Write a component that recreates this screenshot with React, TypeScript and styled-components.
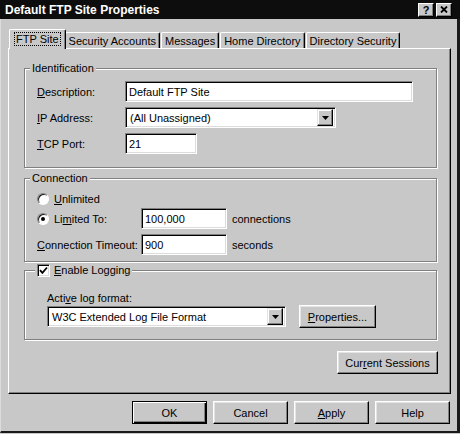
import React from 'react';
import styled, { createGlobalStyle, css } from 'styled-components';

const face = '#c8c8c8';
const shade = '#808080';

const GlobalStyle = createGlobalStyle`
  html, body {
    margin: 0;
    padding: 0;
    background: ${face};
  }
  body {
    font-family: 'Liberation Sans', Arial, sans-serif;
    font-size: 11px;
    color: #000;
  }
  * {
    box-sizing: border-box;
  }
`;

const Window = styled.div`
  width: 460px;
  height: 434px;
  display: flex;
  flex-direction: column;
  background: ${face};
  padding-bottom: 1px;
`;

const TitleBar = styled.div`
  height: 19px;
  flex: none;
  display: flex;
  align-items: center;
  gap: 2px;
  padding: 0 8px 0 5px;
  background: #0d0d0d;
`;

const Title = styled.span`
  flex: 1;
  color: #fff;
  font-weight: bold;
  font-size: 12px;
`;

const CaptionButton = styled.div`
  width: 16px;
  height: 14px;
  display: flex;
  align-items: center;
  justify-content: center;
  background: ${face};
  border: 1px solid;
  border-color: #fff #000 #000 #fff;
  box-shadow: inset -1px -1px ${shade};
  font-weight: bold;
  font-size: 11px;
`;

const Body = styled.div`
  flex: 1;
  display: flex;
  flex-direction: column;
  padding: 10px 6px 0 7px;
  border-left: 1px solid #dcdcdc;
  border-right: 3px solid #1a1a1a;
  border-bottom: 2px solid #1a1a1a;
`;

const TabRow = styled.div`
  height: 19px;
  display: flex;
  align-items: flex-end;
  gap: 1px;
  padding-left: 3px;
`;

const Tab = styled.div<{ $active?: boolean }>`
  height: 16px;
  display: flex;
  align-items: center;
  padding: 0 3px;
  background: ${face};
  border-top: 1px solid #fff;
  border-left: 1px solid #fff;
  border-right: 1px solid #000;
  border-radius: 2px 2px 0 0;
  box-shadow: inset -1px 0 ${shade};
  white-space: nowrap;

  ${(p) =>
    p.$active &&
    css`
      height: 20px;
      padding: 0 5px 2px;
      margin: 0 -2px -1px;
      position: relative;
      z-index: 1;
    `}
`;

const Focus = styled.span`
  outline: 1px dotted #000;
  padding: 0 1px;
`;

const Panel = styled.div`
  height: 346px;
  flex: none;
  display: flex;
  flex-direction: column;
  padding: 13px 13px 0 15px;
  border: 1px solid;
  border-color: #fff #000 #000 #fff;
  box-shadow: inset -1px -1px ${shade};
`;

const Group = styled.fieldset<{ $mt?: number }>`
  margin: ${(p) => p.$mt ?? 0}px 0 0;
  padding: 0;
  min-width: 0;
  border: 1px solid ${shade};
  box-shadow: inset 1px 1px #fff, 1px 1px #fff;
`;

const GroupBody = styled.div<{ $pl?: number; $pb?: number }>`
  padding: 0 12px ${(p) => p.$pb ?? 12}px ${(p) => p.$pl ?? 12}px;
`;

const Legend = styled.legend<{ $ml?: number }>`
  margin-left: ${(p) => p.$ml ?? 5}px;
  padding: 0 2px;
  height: 13px;
  line-height: 13px;
  display: flex;
  align-items: center;
  gap: 4px;
  background: ${face};
`;

const Line = styled.div<{ $mt?: number; $h?: number }>`
  display: flex;
  align-items: center;
  height: ${(p) => p.$h ?? 21}px;
  margin-top: ${(p) => p.$mt ?? 0}px;
`;

const Label = styled.span<{ $w?: number }>`
  display: flex;
  align-items: center;
  gap: 5px;
  flex: none;
  width: ${(p) => (p.$w ? `${p.$w}px` : 'auto')};
  white-space: nowrap;
`;

const Key = styled.span`
  text-decoration: underline;
`;

const sunken = css`
  border: 1px solid;
  border-color: ${shade} #fff #fff ${shade};
  box-shadow: inset 1px 1px #000, inset -1px -1px #dcdcdc;
`;

const TextBox = styled.input<{ $w: number }>`
  width: ${(p) => p.$w}px;
  height: 21px;
  padding: 0 3px;
  margin: 0;
  font: inherit;
  color: #000;
  background: #fff;
  outline: none;
  ${sunken}
`;

const Combo = styled.div<{ $w: number }>`
  width: ${(p) => p.$w}px;
  height: 21px;
  display: flex;
  align-items: center;
  padding: 2px 2px 2px 4px;
  background: #fff;
  ${sunken}
`;

const ComboText = styled.span`
  flex: 1;
`;

const ArrowButton = styled.span`
  width: 16px;
  height: 17px;
  display: flex;
  align-items: center;
  justify-content: center;
  background: ${face};
  border: 1px solid;
  border-color: #e4e4e4 #000 #000 #e4e4e4;
  box-shadow: inset -1px -1px ${shade}, inset 1px 1px #fff;
`;

const Unit = styled.span`
  margin-left: 5px;
`;

const Radio = styled.span<{ $checked?: boolean }>`
  width: 12px;
  height: 12px;
  flex: none;
  display: flex;
  align-items: center;
  justify-content: center;
  border-radius: 50%;
  background: #fff;
  border: 1px solid;
  border-color: ${shade} #fff #fff ${shade};
  box-shadow: inset 1px 1px #1a1a1a;

  &::after {
    content: '';
    width: 4px;
    height: 4px;
    border-radius: 50%;
    background: #000;
    display: ${(p) => (p.$checked ? 'block' : 'none')};
  }
`;

const Check = styled.span`
  width: 13px;
  height: 13px;
  flex: none;
  display: flex;
  align-items: center;
  justify-content: center;
  background: #fff;
  ${sunken}
`;

const Button = styled.button<{ $w: number; $default?: boolean }>`
  width: ${(p) => p.$w}px;
  height: 23px;
  flex: none;
  padding: 0;
  margin: 0;
  font: inherit;
  color: #000;
  background: ${face};
  border: 1px solid;
  border-color: #fff #000 #000 #fff;
  box-shadow: inset -1px -1px ${shade}, inset 1px 1px #e4e4e4;

  ${(p) =>
    p.$default &&
    css`
      border-color: #000;
      box-shadow: inset 1px 1px #fff, inset -1px -1px #000, inset -2px -2px ${shade};
    `}
`;

const FormatRow = styled.div`
  display: flex;
  align-items: center;
  gap: 13px;
  margin-top: 1px;
`;

const SessionRow = styled.div`
  display: flex;
  justify-content: flex-end;
  margin: 11px -1px 0 0;
`;

const ButtonBar = styled.div`
  display: flex;
  justify-content: flex-end;
  gap: 6px;
  margin-top: 7px;
  padding-right: 1px;
`;

const DownArrow = () => (
  <svg width="7" height="4" viewBox="0 0 7 4">
    <path d="M0 0h7L3.5 4z" fill="#000" />
  </svg>
);

const CloseGlyph = () => (
  <svg width="8" height="7" viewBox="0 0 8 7">
    <path d="M1 0.5l6 6M7 0.5l-6 6" stroke="#000" strokeWidth="1.8" />
  </svg>
);

const CheckMark = () => (
  <svg width="9" height="9" viewBox="0 0 9 9">
    <path d="M1 4.2l2.4 2.6L8 1.5" stroke="#000" strokeWidth="1.8" fill="none" />
  </svg>
);

const tabs = ['FTP Site', 'Security Accounts', 'Messages', 'Home Directory', 'Directory Security'];

export default function App() {
  return (
    <>
      <GlobalStyle />
      <Window>
        <TitleBar>
          <Title>Default FTP Site Properties</Title>
          <CaptionButton>?</CaptionButton>
          <CaptionButton>
            <CloseGlyph />
          </CaptionButton>
        </TitleBar>

        <Body>
          <TabRow>
            {tabs.map((t, i) => (
              <Tab key={t} $active={i === 0}>
                {i === 0 ? <Focus>{t}</Focus> : t}
              </Tab>
            ))}
          </TabRow>

          <Panel>
            <Group>
              <Legend>Identification</Legend>
              <GroupBody $pb={13}>
                <Line $mt={6}>
                  <Label $w={88}>
                    <span>
                      <Key>D</Key>escription:
                    </span>
                  </Label>
                  <TextBox $w={288} defaultValue="Default FTP Site" />
                </Line>
                <Line $mt={5}>
                  <Label $w={88}>
                    <span>
                      <Key>I</Key>P Address:
                    </span>
                  </Label>
                  <Combo $w={211}>
                    <ComboText>(All Unassigned)</ComboText>
                    <ArrowButton>
                      <DownArrow />
                    </ArrowButton>
                  </Combo>
                </Line>
                <Line $mt={5}>
                  <Label $w={88}>
                    <span>
                      <Key>T</Key>CP Port:
                    </span>
                  </Label>
                  <TextBox $w={72} defaultValue="21" />
                </Line>
              </GroupBody>
            </Group>

            <Group $mt={4}>
              <Legend>Connection</Legend>
              <GroupBody $pb={6}>
                <Line $mt={7} $h={13}>
                  <Label>
                    <Radio />
                    <span>
                      <Key>U</Key>nlimited
                    </span>
                  </Label>
                </Line>
                <Line $mt={3}>
                  <Label $w={104}>
                    <Radio $checked />
                    <span>
                      Li<Key>m</Key>ited To:
                    </span>
                  </Label>
                  <TextBox $w={86} defaultValue="100,000" />
                  <Unit>connections</Unit>
                </Line>
                <Line $mt={5}>
                  <Label $w={104}>
                    <span>
                      <Key>C</Key>onnection Timeout:
                    </span>
                  </Label>
                  <TextBox $w={86} defaultValue="900" />
                  <Unit>seconds</Unit>
                </Line>
              </GroupBody>
            </Group>

            <Group $mt={2}>
              <Legend $ml={10}>
                <Check>
                  <CheckMark />
                </Check>
                <span>
                  <Key>E</Key>nable Logging
                </span>
              </Legend>
              <GroupBody $pl={22} $pb={11}>
                <Line $mt={14} $h={13}>
                  <span>
                    Acti<Key>v</Key>e log format:
                  </span>
                </Line>
                <FormatRow>
                  <Combo $w={239}>
                    <ComboText>W3C Extended Log File Format</ComboText>
                    <ArrowButton>
                      <DownArrow />
                    </ArrowButton>
                  </Combo>
                  <Button $w={77}>
                    <Key>P</Key>roperties...
                  </Button>
                </FormatRow>
              </GroupBody>
            </Group>

            <SessionRow>
              <Button $w={101}>
                Cur<Key>r</Key>ent Sessions
              </Button>
            </SessionRow>
          </Panel>

          <ButtonBar>
            <Button $w={75} $default>
              OK
            </Button>
            <Button $w={75}>Cancel</Button>
            <Button $w={75}>
              <Key>A</Key>pply
            </Button>
            <Button $w={75}>Help</Button>
          </ButtonBar>
        </Body>
      </Window>
    </>
  );
}
